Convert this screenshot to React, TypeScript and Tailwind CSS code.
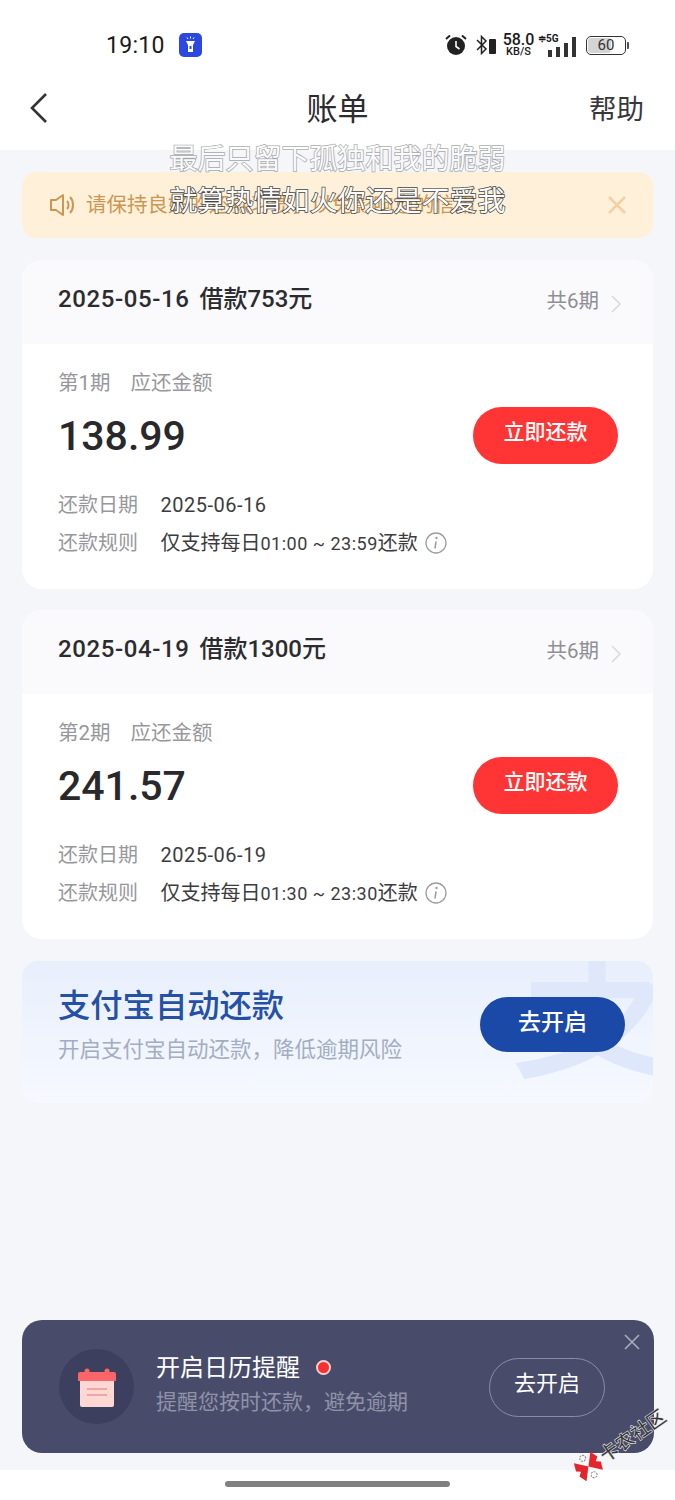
const font = "font-['Roboto','Noto_Sans_CJK_SC',sans-serif]"

function StatusBar() {
  return (
    <div className="flex h-[90px] items-center pl-[106px] pr-[46px] text-[#1a1a1a]">
      <span className="text-[23px] leading-none tracking-[0.3px]">19:10</span>
      <svg width="23" height="24" viewBox="0 0 23 24" className="ml-[14px]">
        <rect width="23" height="24" rx="5" fill="#2b48e0" />
        <path d="M7 8h9l-2 4v7H9v-7z" fill="#fff" />
        <rect x="10.500" y="13" width="2" height="3" fill="#2b48e0" />
        <path d="M11.500 3.500v2M8 4.500l1 1.500M15 4.500l-1 1.500" stroke="#fff" strokeWidth="1" />
      </svg>
      <div className="ml-auto flex items-center">
        <svg width="24" height="24" viewBox="0 0 24 24" className="ml-[2px]">
          <circle cx="12" cy="13" r="9" fill="#222" />
          <path d="M12 8v5.500l3.500 2.500" stroke="#fff" strokeWidth="1.600" fill="none" />
          <path d="M2 6l4-3.500M22 6l-4-3.500" stroke="#222" strokeWidth="2" />
        </svg>
        <svg width="22" height="22" viewBox="0 0 22 22" className="ml-[7px]">
          <path d="M2 6l9 9-4.500 4.500v-17L11 7l-9 9" stroke="#222" strokeWidth="1.500" fill="none" />
          <rect x="14" y="5" width="7" height="15" rx="1" fill="#222" />
        </svg>
        <div className="ml-[5px] flex w-[33px] flex-col items-center leading-none">
          <span className="text-[16px] font-medium leading-[14px]">58.0</span>
          <span className="text-[11px] font-medium leading-[10px]">KB/S</span>
        </div>
        <div className="relative ml-[3px] flex h-[24px] w-[38px] items-end justify-end gap-[4px]">
          <span className="absolute left-0 top-0 text-[10px] font-bold leading-[12px]">≑5G</span>
          <i className="h-[7px] w-[4px] bg-[#333]" />
          <i className="h-[10px] w-[4px] bg-[#333]" />
          <i className="h-[14px] w-[4px] bg-[#333]" />
          <i className="h-[20px] w-[4px] bg-[#333]" />
        </div>
        <div className="ml-[10px] flex items-center">
          <div className="relative flex h-[19px] w-[40px] items-center justify-center overflow-hidden rounded-[5px] border border-[#333]">
            <div className="absolute inset-y-[1px] left-[1px] w-[23px] rounded-[3px] bg-[#d4d4d4]" />
            <span className="relative text-[15px] leading-none text-[#333]">60</span>
          </div>
          <div className="ml-[1px] h-[7px] w-[2px] rounded-r-[1px] bg-[#555]" />
        </div>
      </div>
    </div>
  )
}

function Bill({ date, amount, period, money, due, rule }: { date: string; amount: string; period: string; money: string; due: string; rule: string }) {
  return (
    <section className="overflow-hidden rounded-[20px] bg-white">
      <div className="flex h-[84px] items-center justify-between bg-[#fafafc] pb-[6px] pl-[36px] pr-[31px]">
        <div className="flex items-center text-[24px] font-medium leading-none text-[#2c2c30]">
          <span className="tracking-[0.6px]">{date}</span>
          <span className="ml-[10px]">借款{amount}元</span>
        </div>
        <div className="mt-[4px] flex items-center text-[#8f8f95]">
          <span className="text-[20.500px] leading-none">共6期</span>
          <svg width="12" height="20" viewBox="0 0 12 20" className="ml-[11px] mt-[5px]">
            <path d="M2 2l8 8-8 8" stroke="#d8d8dc" strokeWidth="1.500" fill="none" />
          </svg>
        </div>
      </div>
      <div className="h-[245px] pl-[36px] pr-[35px] pt-[27px]">
        <div className="flex gap-[20px] text-[20.500px] leading-[24px] text-[#97979c]">
          <span>{period}</span>
          <span>应还金额</span>
        </div>
        <div className="mt-[16px] flex h-[50px] items-start justify-between">
          <span className="text-[41px] font-medium leading-[50px] text-[#29292c]">{money}</span>
          <button className="mt-[-4px] h-[57px] w-[145px] rounded-full bg-[#ff3535] pb-[6px] text-[21px] font-medium text-white">立即还款</button>
        </div>
        <div className="mt-[25px] flex h-[38px] items-center text-[20px]">
          <span className="w-[102.500px] text-[#97979c]">还款日期</span>
          <span className="tracking-[0.5px] text-[#3c3c40]">{due}</span>
        </div>
        <div className="flex h-[38px] items-center text-[20px]">
          <span className="w-[102.500px] text-[#97979c]">还款规则</span>
          <span className="text-[#3c3c40]">仅支持每日<span className="text-[18px] tracking-[0.5px]">{rule}</span>还款</span>
          <svg width="22" height="22" viewBox="0 0 22 22" className="ml-[7px]">
            <circle cx="11" cy="11" r="10" stroke="#9c9c9f" strokeWidth="1.300" fill="none" />
            <circle cx="11.500" cy="6" r="1.200" fill="#9c9c9f" />
            <path d="M11 9.500l-1 7" stroke="#9c9c9f" strokeWidth="1.600" />
          </svg>
        </div>
      </div>
    </section>
  )
}

export default function App() {
  return (
    <div className={`relative flex h-[1500px] w-[675px] flex-col overflow-hidden bg-[#f5f6fa] ${font}`}>
      <header className="h-[150px] bg-white">
        <StatusBar />
        <div className="relative flex h-[38px] items-center justify-center">
          <svg width="20" height="32" viewBox="0 0 20 32" className="absolute left-[29px] top-[2px]">
            <path d="M17 2L3 16l14 14" stroke="#333" strokeWidth="2.600" fill="none" />
          </svg>
          <h1 className="text-[31px] leading-none text-[#2c2c30]">账单</h1>
          <span className="absolute right-[31px] top-[6px] text-[27.500px] leading-none text-[#38383c]">帮助</span>
        </div>
      </header>

      <main className="flex flex-1 flex-col px-[22px] pt-[22px]">
        <div className="mb-[22px] flex h-[66px] items-center rounded-[14px] bg-[#fff0d9] pl-[27px] pr-[26px]">
          <svg width="28" height="26" viewBox="0 0 28 26">
            <path d="M2 8h5l7-5v20l-7-5H2z" stroke="#cd9650" strokeWidth="2" fill="none" strokeLinejoin="round" />
            <path d="M18 9c2 2 2 6 0 8M21 5c4 4 4 12 0 16" stroke="#cd9650" strokeWidth="2" fill="none" />
          </svg>
          <span className="ml-[9px] text-[20.500px] leading-none text-[#cb9752]">请保持良好的还款习惯，以免影响您的信用</span>
          <svg width="20" height="20" viewBox="0 0 20 20" className="ml-auto">
            <path d="M2 2l16 16M18 2L2 18" stroke="#f4d1a4" strokeWidth="2.500" />
          </svg>
        </div>

        <div className="flex flex-col gap-[21px]">
          <Bill date="2025-05-16" amount="753" period="第1期" money="138.99" due="2025-06-16" rule="01:00 ~ 23:59" />
          <Bill date="2025-04-19" amount="1300" period="第2期" money="241.57" due="2025-06-19" rule="01:30 ~ 23:30" />
        </div>

        <section className="relative mt-[22px] flex h-[142px] items-center justify-between overflow-hidden rounded-[16px] bg-gradient-to-b from-[#e8effc] to-[#f6f9ff] pl-[36px] pr-[28px]">
          <span className="absolute left-[488px] top-[-44px] text-[175px] font-medium leading-none text-[#dfe8fa]">支</span>
          <div className="relative pb-[14px]">
            <h2 className="text-[32.300px] font-medium leading-[40px] text-[#2450a5]">支付宝自动还款</h2>
            <p className="mt-[9px] text-[21.500px] leading-[30px] text-[#a3adc2]">开启支付宝自动还款，降低逾期风险</p>
          </div>
          <button className="relative mb-[16px] h-[55px] w-[145px] rounded-full bg-[#1b49a8] pb-[2px] text-[23px] font-medium text-white">去开启</button>
        </section>

        <section className="relative mt-[217px] flex h-[133px] w-[632px] items-center rounded-[20px] bg-[#484c6a] pl-[37px]">
          <div className="flex h-[75px] w-[75px] items-center justify-center rounded-full bg-[#3c3f5e]">
            <svg width="40" height="44" viewBox="0 0 40 44">
              <rect x="3" y="8" width="34" height="34" rx="2" fill="#ffd8d4" />
              <path d="M1 16V9q0-2 2-2h34q2 0 2 2v7z" fill="#fb6468" />
              <circle cx="10" cy="6" r="2.500" fill="#fb6468" />
              <circle cx="30" cy="6" r="2.500" fill="#fb6468" />
              <rect x="10" y="23" width="20" height="2" fill="#f0a5a5" />
              <rect x="10" y="29" width="20" height="2" fill="#f0a5a5" />
            </svg>
          </div>
          <div className="ml-[22px] pb-[5px]">
            <div className="flex items-center">
              <span className="text-[24px] leading-[32px] text-white">开启日历提醒</span>
              <i className="ml-[16px] h-[15px] w-[15px] rounded-full border-2 border-[#ffd0d0] bg-[#f5302f]" />
            </div>
            <p className="mt-[3px] text-[21px] leading-[30px] text-[#8f92a8]">提醒您按时还款，避免逾期</p>
          </div>
          <button className="absolute left-[467px] top-[38px] h-[59px] w-[116px] rounded-full border border-[#8a8da5] pb-[8px] text-[22px] text-white">去开启</button>
          <svg width="18" height="18" viewBox="0 0 18 18" className="absolute right-[13px] top-[13px]">
            <path d="M2 2l14 14M16 2L2 16" stroke="#a8abbd" strokeWidth="1.600" />
          </svg>
        </section>
      </main>

      <footer className="flex h-[30px] items-start justify-center bg-white pt-[11px]">
        <div className="h-[6px] w-[225px] rounded-full bg-[#808080]" />
      </footer>

      {/* subtitles burned into the recording */}
      <div className="pointer-events-none absolute left-0 top-[139px] flex w-[675px] flex-col items-center text-[28px] leading-[42px] text-white [-webkit-text-stroke:1.500px_#444] [paint-order:stroke_fill]">
        <span className="opacity-45">最后只留下孤独和我的脆弱</span>
        <span>就算热情如火你还是不爱我</span>
      </div>

      {/* forum watermark */}
      <div className="pointer-events-none absolute left-[566px] top-[1403px] flex h-[80px] w-[112px] -rotate-[35deg] items-center">
        <svg width="30" height="28" viewBox="0 0 30 28" className="shrink-0">
          <path d="M15 14L5 3 2 11l4 3-4 3 3 8zM15 14L25 3l3 8-4 3 4 3-3 8z" fill="#e5252a" />
          <circle cx="15" cy="4" r="3" fill="none" stroke="#888" strokeWidth="1" strokeDasharray="2 1" />
          <circle cx="15" cy="24" r="3" fill="none" stroke="#888" strokeWidth="1" strokeDasharray="2 1" />
        </svg>
        <span className="ml-[1px] whitespace-nowrap text-[19px] font-bold leading-none text-[#333] [-webkit-text-stroke:0.500px_#fff]">卡农社区</span>
      </div>
    </div>
  )
}
